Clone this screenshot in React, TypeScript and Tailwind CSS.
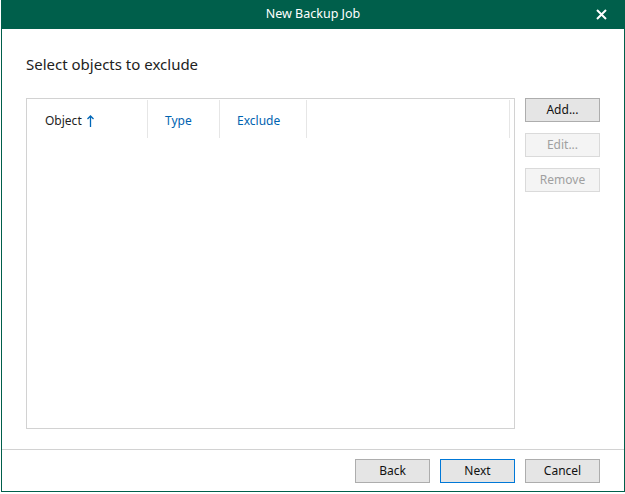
import type { FC } from 'react';

const font = { fontFamily: '"Noto Sans", "Open Sans", sans-serif' };

const Btn: FC<{ label: string; disabled?: boolean; primary?: boolean }> = ({ label, disabled, primary }) => (
  <button
    type="button"
    className={[
      'h-[24px] w-[75px] border text-[12px] leading-none',
      disabled
        ? 'border-[#dadada] bg-[#f4f4f4] text-[#a0a0a0]'
        : primary
          ? 'border-[#0078d7] bg-[#e5e5e5] text-[#111]'
          : 'border-[#adadad] bg-[#e5e5e5] text-[#111]',
    ].join(' ')}
  >
    {label}
  </button>
);

export default function App() {
  return (
    <div className="h-[494px] w-[625px] bg-white" style={font}>
      <div className="ml-[1px] flex h-[492px] w-[624px] flex-col border-x border-b border-[#005f4b]">
        {/* Title bar */}
        <div className="relative flex h-[29px] shrink-0 items-center justify-center bg-[#005f4b] text-[12.5px] text-white">
          New Backup Job
          <svg className="absolute right-[17px] top-[9px]" width="11" height="11" viewBox="0 0 11 11">
            <path d="M1 1L10 10M10 1L1 10" stroke="white" strokeWidth="2" />
          </svg>
        </div>

        {/* Body */}
        <div className="flex flex-1 flex-col">
          <div className="ml-[24px] mt-[25px] text-[15px] leading-[20px] text-[#222]">Select objects to exclude</div>
          <div className="ml-[24px] mt-[24px] flex gap-[10px]">
            <div className="h-[331px] w-[489px] border border-[#d2d2d2]">
              <div className="mt-[1px] flex h-[38px] text-[12px]">
                <div className="flex w-[121px] items-center gap-[5px] border-r border-[#e6e6e6] pl-[18px] pt-[3px] text-[#1e1e1e]">
                  Object
                  <svg width="7" height="12" viewBox="0 0 7 12">
                    <path d="M3.5 1V12M0.5 4L3.5 1L6.5 4" stroke="#0067b8" strokeWidth="1.3" fill="none" />
                  </svg>
                </div>
                <div className="flex w-[72px] items-center border-r border-[#e6e6e6] pl-[17px] pt-[3px] text-[#0063b1]">Type</div>
                <div className="flex w-[87px] items-center border-r border-[#e6e6e6] pl-[17px] pt-[3px] text-[#0063b1]">Exclude</div>
                <div className="w-[203px] border-r border-[#e6e6e6]" />
              </div>
            </div>
            <div className="flex flex-col gap-[11px]">
              <Btn label="Add..." />
              <Btn label="Edit..." disabled />
              <Btn label="Remove" disabled />
            </div>
          </div>
        </div>

        {/* Footer */}
        <div className="flex h-[42px] shrink-0 items-center justify-end gap-[10px] border-t border-[#d2d2d2] pr-[24px]">
          <Btn label="Back" />
          <Btn label="Next" primary />
          <Btn label="Cancel" />
        </div>
      </div>
    </div>
  );
}
